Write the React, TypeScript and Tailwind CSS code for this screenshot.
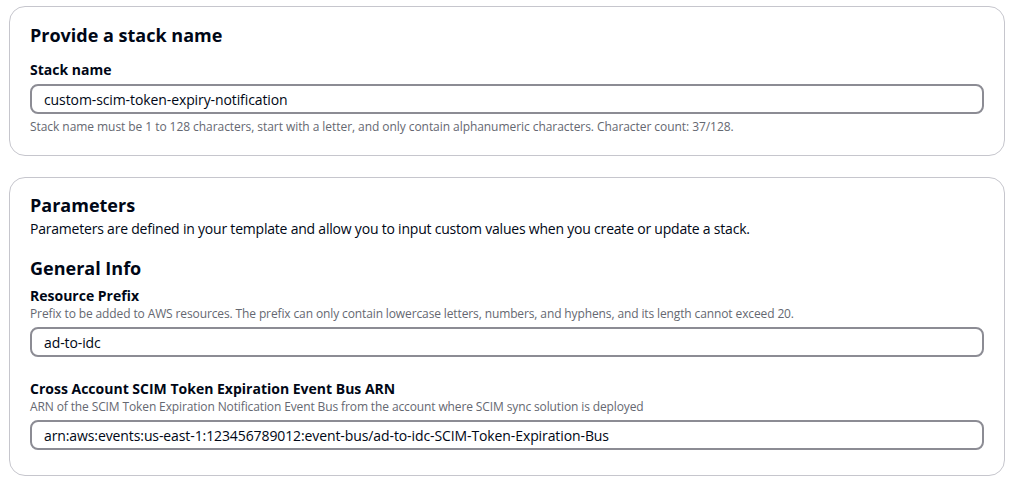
const font = { fontFamily: '"Open Sans", "Noto Sans", sans-serif' }

function Field({ label, help, value, after }: { label: string; help?: string; value: string; after?: string }) {
  return (
    <div>
      <div className="text-[14px] leading-[18px] font-bold text-[#000716]">{label}</div>
      {help && <div className="text-[12px] leading-[16px] text-[#656871] mt-[1px] tracking-[-0.12px]">{help}</div>}
      <div className="mt-[5px] h-[30px] border-2 border-[#8c8c94] rounded-[8px] flex items-center px-[12px] text-[14px] text-[#000716] tracking-[-0.1px]">
        {value}
      </div>
      {after && <div className="text-[12px] leading-[16px] text-[#656871] mt-[5px] tracking-[-0.06px]">{after}</div>}
    </div>
  )
}

export default function App() {
  return (
    <div className="bg-white w-[1013px] h-[481px] pt-[6px] pl-[9px] pr-[8px]" style={font}>
      <div className="border border-[#c6c6cd] rounded-[16px] pt-[17px] pb-[20px] px-[20px]">
        <h2 className="text-[18px] leading-[22px] font-bold text-[#000716]">Provide a stack name</h2>
        <div className="mt-[15px]">
          <Field
            label="Stack name"
            value="custom-scim-token-expiry-notification"
            after="Stack name must be 1 to 128 characters, start with a letter, and only contain alphanumeric characters. Character count: 37/128."
          />
        </div>
      </div>

      <div className="mt-[21px] border border-[#c6c6cd] rounded-[16px] pt-[16px] pb-[25px] px-[20px]">
        <h2 className="text-[18px] leading-[22px] font-bold text-[#000716]">Parameters</h2>
        <p className="text-[14px] leading-[20px] text-[#000716] mt-[3px] tracking-[-0.21px]">
          Parameters are defined in your template and allow you to input custom values when you create or update a stack.
        </p>
        <h3 className="text-[18px] leading-[22px] font-bold text-[#000716] mt-[18px]">General Info</h3>
        <div className="mt-[8px]">
          <Field
            label="Resource Prefix"
            help="Prefix to be added to AWS resources. The prefix can only contain lowercase letters, numbers, and hyphens, and its length cannot exceed 20."
            value="ad-to-idc"
          />
        </div>
        <div className="mt-[23px]">
          <Field
            label="Cross Account SCIM Token Expiration Event Bus ARN"
            help="ARN of the SCIM Token Expiration Notification Event Bus from the account where SCIM sync solution is deployed"
            value="arn:aws:events:us-east-1:123456789012:event-bus/ad-to-idc-SCIM-Token-Expiration-Bus"
          />
        </div>
      </div>
    </div>
  )
}
